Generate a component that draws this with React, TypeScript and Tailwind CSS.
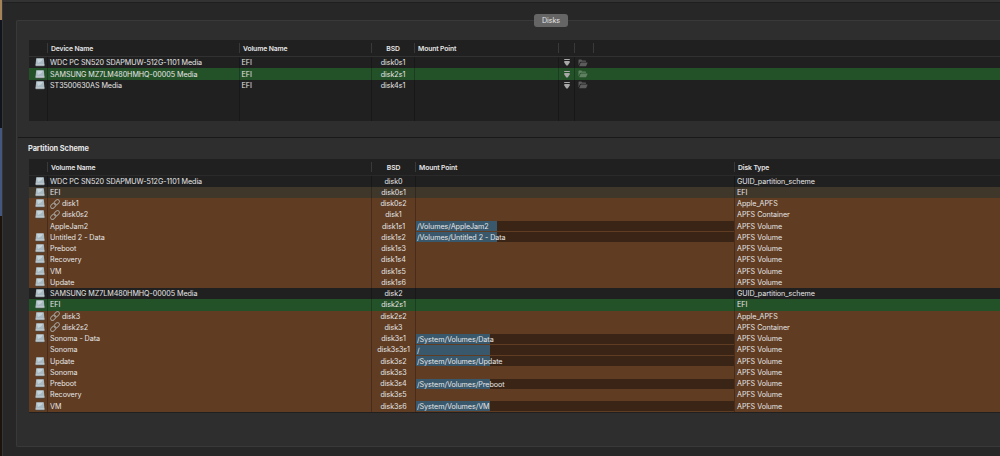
import React from 'react';
import { clsx } from 'clsx';

type Tone = 'plain' | 'efi' | 'apfs' | 'boot';

interface Disk {
  device: string;
  volume: string;
  bsd: string;
  tone: Tone;
}

interface Partition {
  name: string;
  bsd: string;
  type: string;
  tone: Tone;
  mount?: string;
  used?: number; // width of the used part in px
  linked?: boolean;
  noIcon?: boolean;
}

const disks: Disk[] = [
  { device: 'WDC PC SN520 SDAPMUW-512G-1101 Media', volume: 'EFI', bsd: 'disk0s1', tone: 'plain' },
  { device: 'SAMSUNG MZ7LM480HMHQ-00005 Media', volume: 'EFI', bsd: 'disk2s1', tone: 'boot' },
  { device: 'ST3500630AS Media', volume: 'EFI', bsd: 'disk4s1', tone: 'plain' },
];

const partitions: Partition[] = [
  { name: 'WDC PC SN520 SDAPMUW-512G-1101 Media', bsd: 'disk0', type: 'GUID_partition_scheme', tone: 'plain' },
  { name: 'EFI', bsd: 'disk0s1', type: 'EFI', tone: 'efi' },
  { name: 'disk1', bsd: 'disk0s2', type: 'Apple_APFS', tone: 'apfs', linked: true },
  { name: 'disk0s2', bsd: 'disk1', type: 'APFS Container', tone: 'apfs', linked: true },
  { name: 'AppleJam2', bsd: 'disk1s1', type: 'APFS Volume', tone: 'apfs', mount: '/Volumes/AppleJam2', used: 81, noIcon: true },
  { name: 'Untitled 2 - Data', bsd: 'disk1s2', type: 'APFS Volume', tone: 'apfs', mount: '/Volumes/Untitled 2 - Data', used: 81 },
  { name: 'Preboot', bsd: 'disk1s3', type: 'APFS Volume', tone: 'apfs' },
  { name: 'Recovery', bsd: 'disk1s4', type: 'APFS Volume', tone: 'apfs' },
  { name: 'VM', bsd: 'disk1s5', type: 'APFS Volume', tone: 'apfs' },
  { name: 'Update', bsd: 'disk1s6', type: 'APFS Volume', tone: 'apfs' },
  { name: 'SAMSUNG MZ7LM480HMHQ-00005 Media', bsd: 'disk2', type: 'GUID_partition_scheme', tone: 'plain' },
  { name: 'EFI', bsd: 'disk2s1', type: 'EFI', tone: 'boot' },
  { name: 'disk3', bsd: 'disk2s2', type: 'Apple_APFS', tone: 'apfs', linked: true },
  { name: 'disk2s2', bsd: 'disk3', type: 'APFS Container', tone: 'apfs', linked: true },
  { name: 'Sonoma - Data', bsd: 'disk3s1', type: 'APFS Volume', tone: 'apfs', mount: '/System/Volumes/Data', used: 74 },
  { name: 'Sonoma', bsd: 'disk3s3s1', type: 'APFS Volume', tone: 'apfs', mount: '/', used: 74, noIcon: true },
  { name: 'Update', bsd: 'disk3s2', type: 'APFS Volume', tone: 'apfs', mount: '/System/Volumes/Update', used: 74 },
  { name: 'Sonoma', bsd: 'disk3s3', type: 'APFS Volume', tone: 'apfs' },
  { name: 'Preboot', bsd: 'disk3s4', type: 'APFS Volume', tone: 'apfs', mount: '/System/Volumes/Preboot', used: 74 },
  { name: 'Recovery', bsd: 'disk3s5', type: 'APFS Volume', tone: 'apfs' },
  { name: 'VM', bsd: 'disk3s6', type: 'APFS Volume', tone: 'apfs', mount: '/System/Volumes/VM', used: 74 },
];

const toneStyle: Record<Tone, string> = {
  plain: '',
  efi: 'bg-[#40372b]',
  apfs: 'bg-[#5f3c22]',
  boot: 'bg-[#245228]',
};

const diskCols = 'grid grid-cols-[18px_192px_132px_43px_144px_16px_19px_1fr]';
const partCols = 'grid grid-cols-[18px_324px_44px_319px_1fr]';
const headText = 'text-[6.8px] font-semibold tracking-[-0.12px]';

const DriveIcon = () => (
  <svg width="10" height="9" viewBox="0 0 10 9" className="block">
    <path d="M1.2 0.3h7.6l.6 6H.6z" fill="#a9b9c1" />
    <path d="M2 0.8h6L6.4 3.2 3 5z" fill="#c6d3d9" />
    <rect x="0.5" y="5.9" width="9" height="2.1" rx="0.4" fill="#bac6cb" />
    <path d="M.8 8.2h8.4" stroke="#4a4f52" strokeWidth="0.7" />
  </svg>
);

const LinkIcon = () => (
  <svg width="10" height="10" viewBox="0 0 10 10" className="block shrink-0 overflow-visible" fill="none" strokeLinecap="round">
    <g transform="rotate(-45 5 5)">
      <rect x="-0.5" y="3.1" width="6" height="3.8" rx="1.9" stroke="#a19a92" strokeWidth="1" />
      <rect x="4.5" y="3.1" width="6" height="3.8" rx="1.9" stroke="#a19a92" strokeWidth="1" />
    </g>
  </svg>
);

const MountIcon = () => (
  <svg width="6" height="7" viewBox="0 0 6 7" className="block" fill="#a8a8a8">
    <rect x="0.2" y="0" width="5.6" height="1" />
    <path d="M0.3 2h5.4v1.4L3.7 6.5H2.3L0.3 3.4z" />
  </svg>
);

const FolderIcon = () => (
  <svg width="10" height="8" viewBox="0 0 10 8" className="block" fill="#fff" fillOpacity="0.27">
    <path d="M0.5 6.6V1.2q0-.6.6-.6h2.2l.9.9h3.2q.6 0 .6.6v.7H2.6q-.5 0-.7.5z" />
    <path d="M1.1 7.2L2.5 3.9q.1-.4.6-.4h6.2q.4 0 .2.4L8.3 6.8q-.2.4-.6.4z" />
  </svg>
);

const HeadCell = ({ children, center }: { children?: React.ReactNode; center?: boolean }) => (
  <div className={clsx('h-[10px] border-l border-[#393939] leading-[11px]', center ? 'text-center' : 'pl-[3px]')}>
    {children}
  </div>
);

const Cell = ({ children, className }: { children?: React.ReactNode; className?: string }) => (
  <div className={clsx('flex min-w-0 items-center border-l border-black/25 whitespace-nowrap', className)}>{children}</div>
);

const DiskTable = () => (
  <div className="ml-3 mt-[19px] h-[81px] overflow-hidden bg-[#202020]">
    <div className={clsx(diskCols, headText, 'h-[17px] items-center border-b border-[#313131]')}>
      <div />
      <HeadCell>Device Name</HeadCell>
      <HeadCell>Volume Name</HeadCell>
      <HeadCell center>BSD</HeadCell>
      <HeadCell>Mount Point</HeadCell>
      <HeadCell />
      <HeadCell />
      <HeadCell />
    </div>
    {disks.map(d => (
      <div key={d.bsd} className={clsx(diskCols, 'h-[11.4px]', toneStyle[d.tone])}>
        <div className="flex items-center pl-1.5"><DriveIcon /></div>
        <Cell className="pl-[2px]">{d.device}</Cell>
        <Cell className="pl-[1.5px]">{d.volume}</Cell>
        <Cell className="justify-center">{d.bsd}</Cell>
        <Cell />
        <Cell className="justify-center"><MountIcon /></Cell>
        <Cell className="pl-[3px]"><FolderIcon /></Cell>
        <div />
      </div>
    ))}
    <div className={clsx(diskCols, 'h-[31px]')}>
      <div /><Cell /><Cell /><Cell /><Cell /><Cell /><Cell /><div />
    </div>
  </div>
);

const MountBar = ({ path, used }: { path: string; used: number }) => (
  <div className="h-[10px] w-full overflow-visible bg-[#3a2415]">
    <div className="h-full bg-[#39586c] pl-px leading-[11px]" style={{ width: used }}>{path}</div>
  </div>
);

const PartitionTable = () => (
  <div className="ml-3 mt-[5px] h-[254px] overflow-hidden bg-[#202020]">
    <div className={clsx(partCols, headText, 'h-[16.6px] items-center border-b border-[#2a2a2a]')}>
      <div />
      <HeadCell>Volume Name</HeadCell>
      <HeadCell center>BSD</HeadCell>
      <HeadCell>Mount Point</HeadCell>
      <HeadCell>Disk Type</HeadCell>
    </div>
    {partitions.map(p => (
      <div key={p.bsd} className={clsx(partCols, 'h-[11.265px]', toneStyle[p.tone])}>
        <div className="flex items-center pl-1.5">{!p.noIcon && <DriveIcon />}</div>
        <Cell className="gap-[2px] pl-[2px]">
          {p.linked && <LinkIcon />}
          {p.name}
        </Cell>
        <Cell className="justify-center">{p.bsd}</Cell>
        <Cell>{p.mount && <MountBar path={p.mount} used={p.used ?? 0} />}</Cell>
        <Cell className="pl-[2px]">{p.type}</Cell>
      </div>
    ))}
  </div>
);

export default function App() {
  return (
    <div className="flex h-[456px] w-[1000px] overflow-hidden bg-[#272727] font-['Inter','Liberation_Sans',sans-serif] text-[7.2px] leading-[11px] tracking-[-0.06px] text-[#e6e6e6]">
      {/* Desktop showing past the window edge */}
      <div className="flex w-[2px] flex-col">
        <div className="h-5 bg-[#a5845a]" />
        <div className="h-[108px] bg-[#11141c]" />
        <div className="h-[88px] bg-[#44577d]" />
        <div className="flex-1 bg-[#1d130e]" />
      </div>

      <main className="flex min-w-0 flex-1 flex-col border-l border-[#363636]">
        <div className="h-[3px] border-b border-[#1f1f1f] bg-[#333333]" />
        <div className="relative ml-[13px] mt-[17px] h-[427px] rounded-l-[2px] border-y border-l border-[#393939] bg-[#2e2e2e]">
          <button className="absolute left-[517px] top-[-7px] h-[13px] w-[34px] rounded-[3px] bg-[#656565] text-center leading-[13px] text-[#e4e4e4]">
            Disks
          </button>
          <DiskTable />
          <div className="ml-px mt-[16px] h-px bg-[#191919]" />
          <h2 className="mt-[6px] pl-[11px] text-[7.4px] font-bold leading-[10px]">Partition Scheme</h2>
          <PartitionTable />
        </div>
      </main>
    </div>
  );
}
